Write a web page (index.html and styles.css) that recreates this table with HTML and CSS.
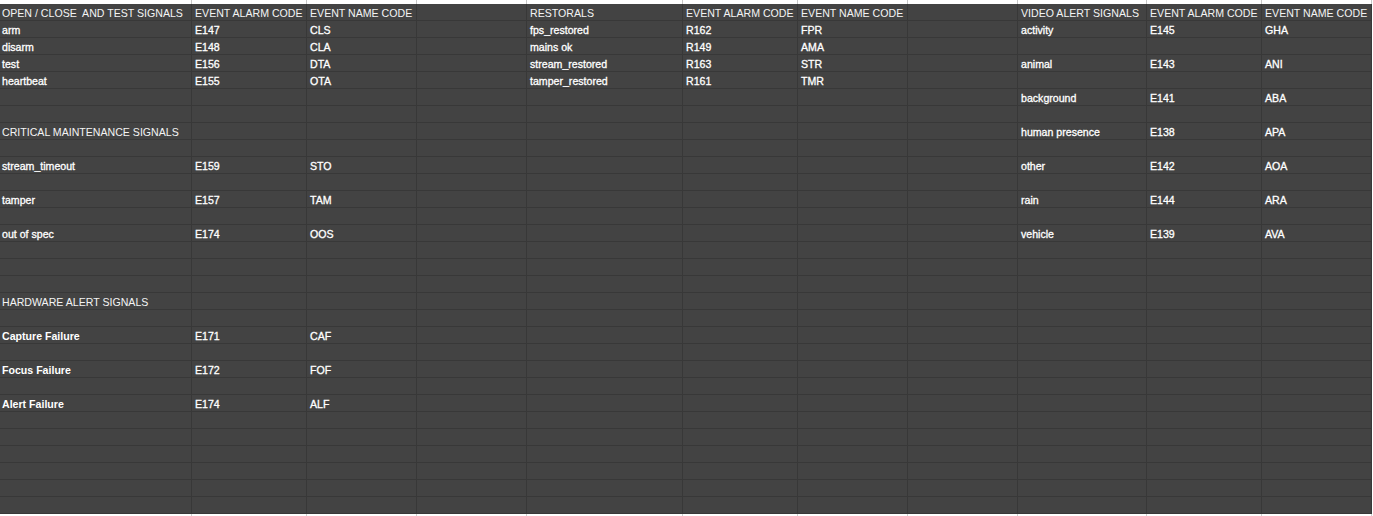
FILE: index.html
```html
<!DOCTYPE html>
<html>
<head>
<meta charset="utf-8">
<link rel="stylesheet" href="styles.css">
</head>
<body>
<div class="sheet">
  <div class="row edge"><div></div><div></div><div></div><div></div><div></div><div></div><div></div><div></div><div></div><div></div><div></div></div>

  <div class="row"><div class="c h">OPEN / CLOSE  AND TEST SIGNALS</div><div class="c h">EVENT ALARM CODE</div><div class="c h">EVENT NAME CODE</div><div class="c"></div><div class="c h">RESTORALS</div><div class="c h">EVENT ALARM CODE</div><div class="c h">EVENT NAME CODE</div><div class="c"></div><div class="c h">VIDEO ALERT SIGNALS</div><div class="c h">EVENT ALARM CODE</div><div class="c h">EVENT NAME CODE</div></div>
  <div class="row"><div class="c">arm</div><div class="c">E147</div><div class="c">CLS</div><div class="c"></div><div class="c">fps_restored</div><div class="c">R162</div><div class="c">FPR</div><div class="c"></div><div class="c">activity</div><div class="c">E145</div><div class="c">GHA</div></div>
  <div class="row"><div class="c">disarm</div><div class="c">E148</div><div class="c">CLA</div><div class="c"></div><div class="c">mains ok</div><div class="c">R149</div><div class="c">AMA</div><div class="c"></div><div class="c"></div><div class="c"></div><div class="c"></div></div>
  <div class="row"><div class="c">test</div><div class="c">E156</div><div class="c">DTA</div><div class="c"></div><div class="c">stream_restored</div><div class="c">R163</div><div class="c">STR</div><div class="c"></div><div class="c">animal</div><div class="c">E143</div><div class="c">ANI</div></div>
  <div class="row"><div class="c">heartbeat</div><div class="c">E155</div><div class="c">OTA</div><div class="c"></div><div class="c">tamper_restored</div><div class="c">R161</div><div class="c">TMR</div><div class="c"></div><div class="c"></div><div class="c"></div><div class="c"></div></div>
  <div class="row"><div class="c"></div><div class="c"></div><div class="c"></div><div class="c"></div><div class="c"></div><div class="c"></div><div class="c"></div><div class="c"></div><div class="c">background</div><div class="c">E141</div><div class="c">ABA</div></div>
  <div class="row"><div class="c"></div><div class="c"></div><div class="c"></div><div class="c"></div><div class="c"></div><div class="c"></div><div class="c"></div><div class="c"></div><div class="c"></div><div class="c"></div><div class="c"></div></div>
  <div class="row"><div class="c h">CRITICAL MAINTENANCE SIGNALS</div><div class="c"></div><div class="c"></div><div class="c"></div><div class="c"></div><div class="c"></div><div class="c"></div><div class="c"></div><div class="c">human presence</div><div class="c">E138</div><div class="c">APA</div></div>
  <div class="row"><div class="c"></div><div class="c"></div><div class="c"></div><div class="c"></div><div class="c"></div><div class="c"></div><div class="c"></div><div class="c"></div><div class="c"></div><div class="c"></div><div class="c"></div></div>
  <div class="row"><div class="c">stream_timeout</div><div class="c">E159</div><div class="c">STO</div><div class="c"></div><div class="c"></div><div class="c"></div><div class="c"></div><div class="c"></div><div class="c">other</div><div class="c">E142</div><div class="c">AOA</div></div>
  <div class="row"><div class="c"></div><div class="c"></div><div class="c"></div><div class="c"></div><div class="c"></div><div class="c"></div><div class="c"></div><div class="c"></div><div class="c"></div><div class="c"></div><div class="c"></div></div>
  <div class="row"><div class="c">tamper</div><div class="c">E157</div><div class="c">TAM</div><div class="c"></div><div class="c"></div><div class="c"></div><div class="c"></div><div class="c"></div><div class="c">rain</div><div class="c">E144</div><div class="c">ARA</div></div>
  <div class="row"><div class="c"></div><div class="c"></div><div class="c"></div><div class="c"></div><div class="c"></div><div class="c"></div><div class="c"></div><div class="c"></div><div class="c"></div><div class="c"></div><div class="c"></div></div>
  <div class="row"><div class="c">out of spec</div><div class="c">E174</div><div class="c">OOS</div><div class="c"></div><div class="c"></div><div class="c"></div><div class="c"></div><div class="c"></div><div class="c">vehicle</div><div class="c">E139</div><div class="c">AVA</div></div>
  <div class="row"><div class="c"></div><div class="c"></div><div class="c"></div><div class="c"></div><div class="c"></div><div class="c"></div><div class="c"></div><div class="c"></div><div class="c"></div><div class="c"></div><div class="c"></div></div>
  <div class="row"><div class="c"></div><div class="c"></div><div class="c"></div><div class="c"></div><div class="c"></div><div class="c"></div><div class="c"></div><div class="c"></div><div class="c"></div><div class="c"></div><div class="c"></div></div>
  <div class="row"><div class="c"></div><div class="c"></div><div class="c"></div><div class="c"></div><div class="c"></div><div class="c"></div><div class="c"></div><div class="c"></div><div class="c"></div><div class="c"></div><div class="c"></div></div>
  <div class="row"><div class="c h">HARDWARE ALERT SIGNALS</div><div class="c"></div><div class="c"></div><div class="c"></div><div class="c"></div><div class="c"></div><div class="c"></div><div class="c"></div><div class="c"></div><div class="c"></div><div class="c"></div></div>
  <div class="row"><div class="c"></div><div class="c"></div><div class="c"></div><div class="c"></div><div class="c"></div><div class="c"></div><div class="c"></div><div class="c"></div><div class="c"></div><div class="c"></div><div class="c"></div></div>
  <div class="row"><div class="c b">Capture Failure</div><div class="c">E171</div><div class="c">CAF</div><div class="c"></div><div class="c"></div><div class="c"></div><div class="c"></div><div class="c"></div><div class="c"></div><div class="c"></div><div class="c"></div></div>
  <div class="row"><div class="c"></div><div class="c"></div><div class="c"></div><div class="c"></div><div class="c"></div><div class="c"></div><div class="c"></div><div class="c"></div><div class="c"></div><div class="c"></div><div class="c"></div></div>
  <div class="row"><div class="c b">Focus Failure</div><div class="c">E172</div><div class="c">FOF</div><div class="c"></div><div class="c"></div><div class="c"></div><div class="c"></div><div class="c"></div><div class="c"></div><div class="c"></div><div class="c"></div></div>
  <div class="row"><div class="c"></div><div class="c"></div><div class="c"></div><div class="c"></div><div class="c"></div><div class="c"></div><div class="c"></div><div class="c"></div><div class="c"></div><div class="c"></div><div class="c"></div></div>
  <div class="row"><div class="c b">Alert Failure</div><div class="c">E174</div><div class="c">ALF</div><div class="c"></div><div class="c"></div><div class="c"></div><div class="c"></div><div class="c"></div><div class="c"></div><div class="c"></div><div class="c"></div></div>
  <div class="row"><div class="c"></div><div class="c"></div><div class="c"></div><div class="c"></div><div class="c"></div><div class="c"></div><div class="c"></div><div class="c"></div><div class="c"></div><div class="c"></div><div class="c"></div></div>
  <div class="row"><div class="c"></div><div class="c"></div><div class="c"></div><div class="c"></div><div class="c"></div><div class="c"></div><div class="c"></div><div class="c"></div><div class="c"></div><div class="c"></div><div class="c"></div></div>
  <div class="row"><div class="c"></div><div class="c"></div><div class="c"></div><div class="c"></div><div class="c"></div><div class="c"></div><div class="c"></div><div class="c"></div><div class="c"></div><div class="c"></div><div class="c"></div></div>
  <div class="row"><div class="c"></div><div class="c"></div><div class="c"></div><div class="c"></div><div class="c"></div><div class="c"></div><div class="c"></div><div class="c"></div><div class="c"></div><div class="c"></div><div class="c"></div></div>
  <div class="row"><div class="c"></div><div class="c"></div><div class="c"></div><div class="c"></div><div class="c"></div><div class="c"></div><div class="c"></div><div class="c"></div><div class="c"></div><div class="c"></div><div class="c"></div></div>
  <div class="row"><div class="c"></div><div class="c"></div><div class="c"></div><div class="c"></div><div class="c"></div><div class="c"></div><div class="c"></div><div class="c"></div><div class="c"></div><div class="c"></div><div class="c"></div></div>

  <div class="row edge bottom"><div></div><div></div><div></div><div></div><div></div><div></div><div></div><div></div><div></div><div></div><div></div></div>
</div>
</body>
</html>
```
FILE: styles.css
```css
html, body {
  margin: 0;
  padding: 0;
  background: #ffffff;
}

body {
  font-family: "Liberation Sans", Arial, sans-serif;
  overflow: hidden;
}

.sheet {
  width: 1372px;
  display: flex;
  flex-direction: column;
}

.row {
  display: grid;
  grid-template-columns: 192px 115px 110px 110px 156px 115px 110px 110px 129px 115px 110px;
}

.c {
  box-sizing: border-box;
  height: 17px;
  padding: 2px 3px 0 3px;
  background: #434343;
  border-right: 1px solid #383838;
  border-bottom: 1px solid #383838;
  color: #ffffff;
  font-size: 10.6px;
  line-height: 14px;
  white-space: pre;
  overflow: hidden;
  -webkit-text-stroke: 0.3px #ffffff;
}

.c.h {
  -webkit-text-stroke: 0;
  color: #f4f4f4;
}

.row > .c:first-child {
  padding-left: 2px;
}

.b {
  font-weight: bold;
  -webkit-text-stroke: 0;
}

.edge > div {
  box-sizing: border-box;
  height: 4px;
  background: #ffffff;
  border-right: 1px solid #c7c7c7;
}

.edge.bottom > div {
  height: 2px;
  border-right-color: #d0d0d0;
}
```
